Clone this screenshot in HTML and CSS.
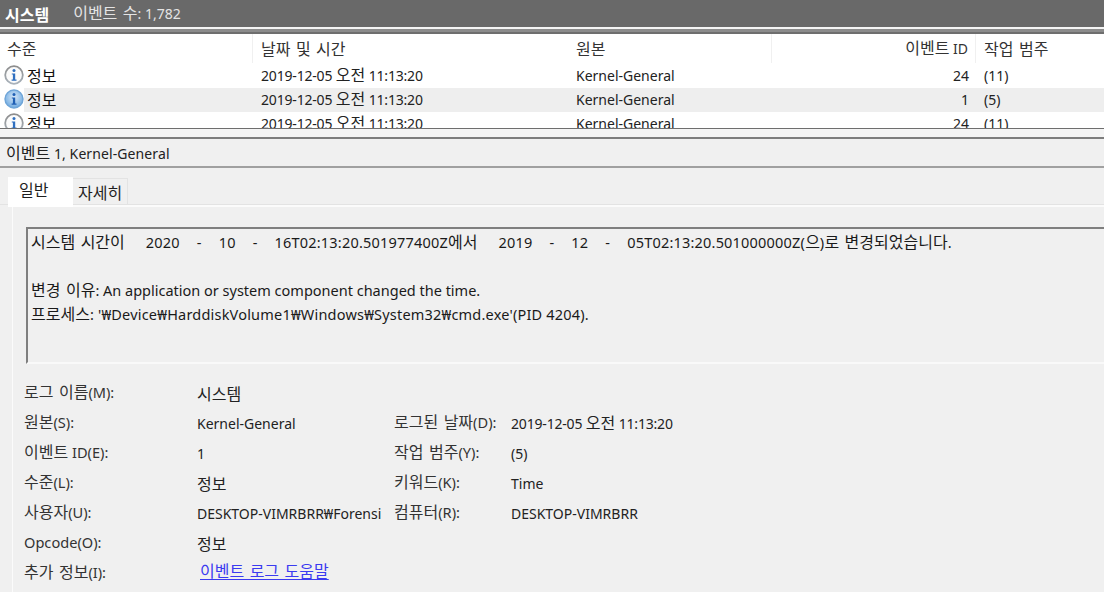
FILE: index.html
```html
<!DOCTYPE html>
<html lang="ko">
<head>
<meta charset="utf-8">
<title>시스템</title>
<link rel="stylesheet" href="styles.css">
</head>
<body>
<svg class="defs" width="0" height="0" aria-hidden="true">
  <defs>
    <linearGradient id="ring" x1="0" y1="0" x2="0" y2="1"><stop offset="0" stop-color="#8d8d8d"/><stop offset="1" stop-color="#a9b2bb"/></linearGradient>
    <radialGradient id="sel" cx="0.5" cy="0.4" r="0.7"><stop offset="0" stop-color="#d7e8f8"/><stop offset="1" stop-color="#5d9fdc"/></radialGradient>
    <symbol id="info" viewBox="0 0 20 20">
      <circle cx="10" cy="10" r="8.8" fill="#fbfbfb" stroke="url(#ring)" stroke-width="1.8"/>
      <circle cx="10" cy="5.6" r="1.5" fill="#2f6fc0"/>
      <path d="M7.8 8.4h3.4v6.2h1.3v1.2H7.6v-1.2h1.3V9.6H7.8z" fill="#2f6fc0"/>
    </symbol>
    <symbol id="info-sel" viewBox="0 0 20 20">
      <circle cx="10" cy="10" r="9" fill="url(#sel)" stroke="#6fa5d8" stroke-width="1.4"/>
      <circle cx="10" cy="5.6" r="1.5" fill="#1f5fb4"/>
      <path d="M7.8 8.4h3.4v6.2h1.3v1.2H7.6v-1.2h1.3V9.6H7.8z" fill="#1f5fb4"/>
    </symbol>
  </defs>
</svg>

<header class="titlebar">
  <span class="titlebar-name k">시스템</span>
  <span class="titlebar-count"><span class="k">이벤트 수</span>: 1,782</span>
</header>
<div class="band"></div>

<section class="list">
  <div class="row head">
    <div class="cell c-level sep k">수준</div>
    <div class="cell c-date k">날짜 및 시간</div>
    <div class="cell c-source sep k">원본</div>
    <div class="cell c-id sep"><span class="k">이벤트</span> ID</div>
    <div class="cell c-task k">작업 범주</div>
  </div>
  <div class="row">
    <div class="cell c-level"><svg class="icon"><use href="#info"/></svg><span class="level-text k">정보</span></div>
    <div class="cell c-date date">2019-12-05 <span class="k">오전</span> 11:13:20</div>
    <div class="cell c-source">Kernel-General</div>
    <div class="cell c-id">24</div>
    <div class="cell c-task">(11)</div>
  </div>
  <div class="row alt">
    <div class="cell c-level"><svg class="icon"><use href="#info-sel"/></svg><span class="level-text k">정보</span></div>
    <div class="cell c-date date">2019-12-05 <span class="k">오전</span> 11:13:20</div>
    <div class="cell c-source">Kernel-General</div>
    <div class="cell c-id">1</div>
    <div class="cell c-task">(5)</div>
  </div>
  <div class="row">
    <div class="cell c-level"><svg class="icon"><use href="#info"/></svg><span class="level-text k">정보</span></div>
    <div class="cell c-date date">2019-12-05 <span class="k">오전</span> 11:13:20</div>
    <div class="cell c-source">Kernel-General</div>
    <div class="cell c-id">24</div>
    <div class="cell c-task">(11)</div>
  </div>
</section>
<div class="splitter"></div>

<div class="event-title"><span class="k">이벤트</span> 1, Kernel-General</div>

<div class="tabs">
  <div class="tab active k">일반</div>
  <div class="tab k">자세히</div>
</div>

<section class="page">
  <div class="message">
    <p class="msg-line msg-time"><span class="k">시스템 시간이</span><span class="gap-l"></span>2020<span class="gap"></span>-<span class="gap"></span>10<span class="gap"></span>-<span class="gap"></span>16T02:13:20.501977400Z<span class="k">에서</span><span class="gap-l"></span>2019<span class="gap"></span>-<span class="gap"></span>12<span class="gap"></span>-<span class="gap"></span>05T02:13:20.501000000Z(<span class="k">으</span>)<span class="k">로 변경되었습니다</span>.</p>
    <p class="msg-line msg-gap"><span class="k">변경 이유</span>: An application or system component changed the time.</p>
    <p class="msg-line msg-path"><span class="k">프로세스</span>: '₩Device₩HarddiskVolume1₩Windows₩System32₩cmd.exe'(PID 4204).</p>
  </div>
  <dl class="props">
    <dt><span class="k">로그 이름</span>(M):</dt><dd class="wide k">시스템</dd>
    <dt><span class="k">원본</span>(S):</dt><dd>Kernel-General</dd><dt><span class="k">로그된 날짜</span>(D):</dt><dd class="date">2019-12-05 <span class="k">오전</span> 11:13:20</dd>
    <dt><span class="k">이벤트</span> ID(E):</dt><dd>1</dd><dt><span class="k">작업 범주</span>(Y):</dt><dd>(5)</dd>
    <dt><span class="k">수준</span>(L):</dt><dd class="k">정보</dd><dt><span class="k">키워드</span>(K):</dt><dd>Time</dd>
    <dt><span class="k">사용자</span>(U):</dt><dd>DESKTOP-VIMRBRR₩Forensi</dd><dt><span class="k">컴퓨터</span>(R):</dt><dd>DESKTOP-VIMRBRR</dd>
    <dt>Opcode(O):</dt><dd class="wide k">정보</dd>
    <dt><span class="k">추가 정보</span>(I):</dt><dd class="wide link-cell"><a class="help k" href="#">이벤트 로그 도움말</a></dd>
  </dl>
</section>
</body>
</html>
```
FILE: styles.css
```css
* { box-sizing: border-box; }
html, body { margin: 0; padding: 0; height: 100%; overflow: hidden; }
body {
  width: 1104px;
  height: 592px;
  background: #f0f0f0;
  color: #1e1e1e;
  font: 14px/20px "Noto Sans", "Noto Sans CJK KR", sans-serif;
}
.defs { position: absolute; }
.k { font-family: "Noto Sans CJK KR", sans-serif; font-size: 16px; letter-spacing: 0; word-spacing: 1px; }
span.k, a.k { line-height: 0; }
span.level-text, span.titlebar-name { line-height: 20px; }
.date { letter-spacing: -0.18px; }

.titlebar {
  height: 27px;
  background: #696969;
  color: #f2f2f2;
  display: flex;
  align-items: center;
  padding-left: 5px;
  gap: 24px;
}
.titlebar-name { font-weight: 700; color: #fff; }
.titlebar-count { color: #e4e4e4; }
.band {
  height: 7px;
  background: #8b8b8b;
  border-top: 2px solid #f4f4f4;
  border-bottom: 2px solid #6e6e6e;
}

.list {
  height: 95px;
  background: #fff;
  overflow: hidden;
  border-bottom: 1px solid #6e6e6e;
}
.row {
  display: grid;
  grid-template-columns: 253px 316px 203px 204px 1fr;
  height: 24px;
  line-height: 24px;
}
.row.head { height: 30px; line-height: 29px; }
.row.alt { background: linear-gradient(to right, #fff 24px, #eeeeee 24px); }
.cell { height: 100%; padding-left: 8px; white-space: nowrap; color: #222; }
.head .cell { height: 29px; color: #333; }
.sep { border-right: 1px solid #f0f0f0; }
.row .c-level { padding-left: 4px; display: flex; align-items: center; }
.head .c-level { padding-left: 7px; }
.c-source { padding-left: 7px; }
.c-id { text-align: right; padding-right: 7px; }
.icon { width: 20px; height: 20px; flex: none; margin-bottom: 2px; }
.level-text { margin: 0 0 3px 3px; color: #111; }

.splitter {
  height: 10px;
  background: #f4f4f4;
  border-bottom: 2px solid #7d7d7d;
}
.event-title {
  height: 29px;
  line-height: 29px;
  padding-left: 6px;
  border-bottom: 2px solid #a0a0a0;
  color: #222;
  letter-spacing: 0.1px;
}

.tabs {
  display: flex;
  align-items: flex-end;
  height: 37px;
  padding-left: 8px;
  border-bottom: 1px solid #e3e3e3;
}
.tab {
  height: 26px;
  padding: 1px 5px 0 5px;
  line-height: 24px;
  background: #f0f0f0;
  border: 1px solid #e3e3e3;
  border-bottom: 0;
  margin-left: -1px;
}
.tab.active {
  height: 30px;
  width: 65px;
  padding: 0 0 0 11px;
  line-height: 25px;
  margin-left: 0;
  margin-bottom: -3px;
  background: #fff;
  border: 0;
  position: relative;
}

.page {
  margin-left: 12px;
  padding: 20px 0 0 13px;
  border-left: 1px solid #fbfbfb;
  border-top: 2px solid #fbfbfb;
  background: #f0f0f0;
  height: 387px;
  overflow: hidden;
}
.message {
  width: 1080px;
  height: 137px;
  border: 2px solid #7f7f7f;
  border-right: 0;
  border-bottom: 2px solid #f9f9f9;
  padding: 1px 0 0 3px;
  color: #1a1a1a;
  font-size: 14.5px;
}
.msg-line { margin: 0; white-space: pre; line-height: 24px; }
.msg-time { letter-spacing: 0.2px; }
.msg-path { letter-spacing: 0.2px; }
.msg-gap { margin-top: 24px; }
.gap { display: inline-block; width: 17px; }
.gap-l { display: inline-block; width: 21px; }

.props {
  margin: 13px 0 0 -2px;
  display: grid;
  grid-template-columns: 173px 197px 117px 1fr;
  grid-auto-rows: 30px;
  align-items: center;
  color: #222;
}
.props dt { white-space: nowrap; color: #333; font-size: 14.6px; }
.props dd { margin: 0; padding-top: 4px; white-space: nowrap; }
.props dd.k { padding-top: 2px; }
.props dd.link-cell { padding-top: 0; }
.props dd.wide { grid-column: 2 / 5; }
.help { color: #3b3bf0; margin-left: 3px; text-underline-offset: 2px; }
```
